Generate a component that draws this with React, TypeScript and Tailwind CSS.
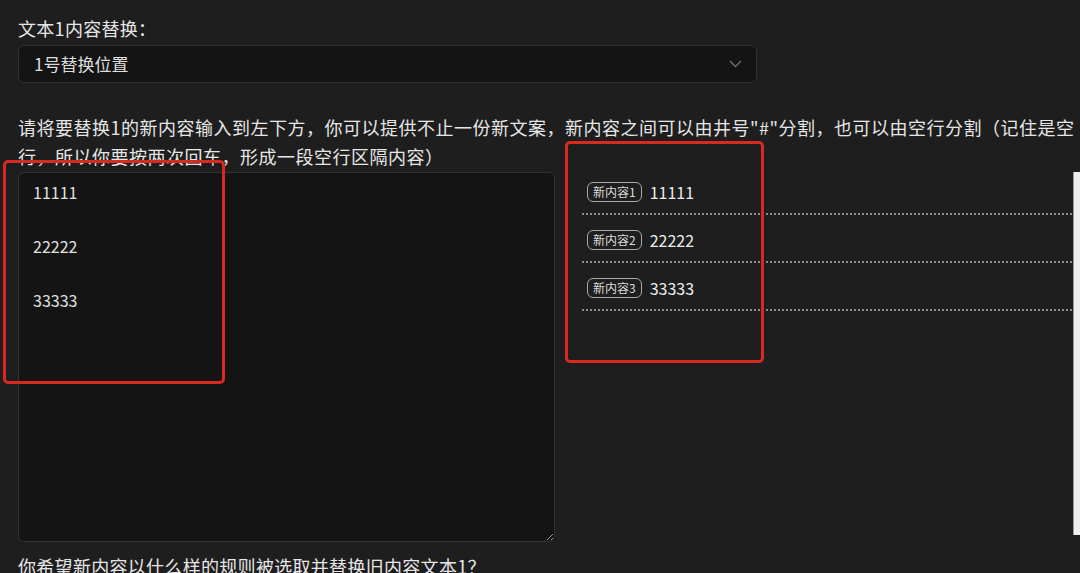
import React from "react";

const FONT = { fontFamily: '"Noto Sans CJK SC", "Noto Sans", sans-serif' };

function Item({ n, text }: { n: number; text: string }) {
  return (
    <div className="mb-[15px]">
      <div className="flex h-[20px] items-center pl-[5px]">
        <span className="flex h-[20px] items-center rounded-[6px] border border-[#a8a8a8] px-[5px] text-[12px] leading-none text-[#dcdcdc]">
          新内容{n}
        </span>
        <span className="ml-[8px] text-[16px] leading-none text-[#ededed]">{text}</span>
      </div>
      <div className="mt-[11px] border-t-2 border-dotted border-[#8c8c8c]" />
    </div>
  );
}

export default function App() {
  return (
    <div
      className="relative h-[573px] w-[1080px] overflow-hidden bg-[#1e1e1e] pl-[18px] pt-[16px]"
      style={FONT}
    >
      <div className="text-[18px] leading-[24px] tracking-[0.3px] text-[#e6e6e6]">文本1内容替换：</div>
      <div className="mt-[5px] flex h-[38px] w-[739px] items-center justify-between rounded-[6px] border border-[#303030] bg-[#141414] pl-[15px] pr-[14px]">
        <span className="text-[17px] text-[#dedede]">1号替换位置</span>
        <svg width="13" height="8" viewBox="0 0 13 8" fill="none">
          <path d="M1 1l5.5 5.5L12 1" stroke="#6e6e6e" strokeWidth="1.4" />
        </svg>
      </div>
      <div className="mt-[30px] w-[1058px] text-[18px] leading-[29px] tracking-[0.5px] text-[#e6e6e6]">
        <div className="whitespace-nowrap">
          请将要替换1的新内容输入到左下方，你可以提供不止一份新文案，新内容之间可以由井号"#"分割，也可以由空行分割（记住是空
        </div>
        <div className="whitespace-nowrap">行，所以你要按两次回车，形成一段空行区隔内容）</div>
      </div>
      <div className="mt-[1px] flex">
        <textarea
          readOnly
          defaultValue={"11111\n\n22222\n\n33333"}
          className="h-[370px] w-[537px] rounded-[6px] border border-[#333] bg-[#141414] pl-[14px] pt-[6px] text-[16px] leading-[27px] text-[#e0e0e0] outline-none"
          style={FONT}
        />
        <div className="ml-[27px] w-[490px] pt-[10px]">
          <Item n={1} text="11111" />
          <Item n={2} text="22222" />
          <Item n={3} text="33333" />
        </div>
        <div className="ml-[1px] h-[363px] w-[7px] border-l border-[#9a9a9a] bg-[#efefef]" />
      </div>
      <div className="mt-[10px] whitespace-nowrap text-[18px] leading-[29px] tracking-[0.3px] text-[#e6e6e6]">
        你希望新内容以什么样的规则被选取并替换旧内容文本1？
      </div>

      <div className="pointer-events-none absolute left-[3px] top-[160px] h-[224px] w-[222px] rounded-[5px] border-[3px] border-[#d92a22]" />
      <div className="pointer-events-none absolute left-[565px] top-[141px] h-[222px] w-[199px] rounded-[5px] border-[3px] border-[#d92a22]" />
    </div>
  );
}
